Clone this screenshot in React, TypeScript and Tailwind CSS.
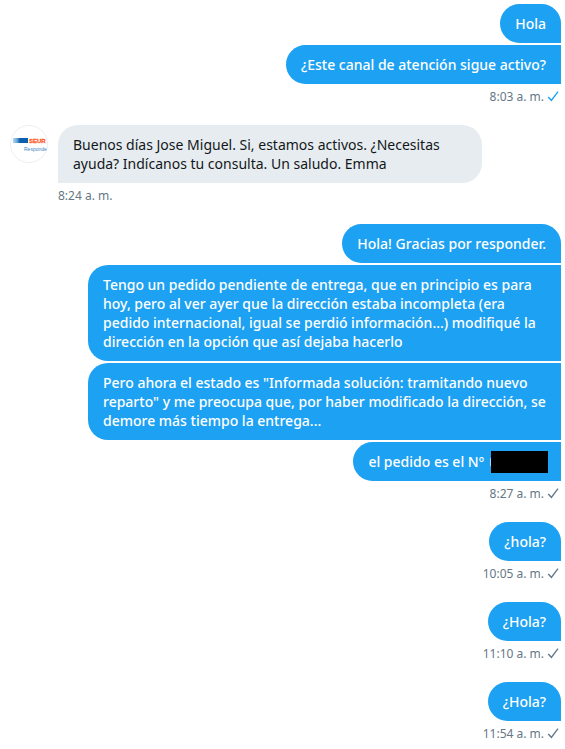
import type { ReactNode } from 'react'
import clsx from 'clsx'

interface Group {
  id: string
  from: 'me' | 'seur'
  messages: ReactNode[]
  time: string
  status?: 'read' | 'sent'
}

const GROUPS: Group[] = [
  {
    id: 'opening',
    from: 'me',
    messages: ['Hola', '¿Este canal de atención sigue activo?'],
    time: '8:03 a. m.',
    status: 'read',
  },
  {
    id: 'reply',
    from: 'seur',
    messages: [
      'Buenos días Jose Miguel. Si, estamos activos. ¿Necesitas ayuda? Indícanos tu consulta. Un saludo. Emma',
    ],
    time: '8:24 a. m.',
  },
  {
    id: 'order',
    from: 'me',
    messages: [
      'Hola! Gracias por responder.',
      'Tengo un pedido pendiente de entrega, que en principio es para hoy, pero al ver ayer que la dirección estaba incompleta (era pedido internacional, igual se perdió información...) modifiqué la dirección en la opción que así dejaba hacerlo',
      'Pero ahora el estado es "Informada solución: tramitando nuevo reparto" y me preocupa que, por haber modificado la dirección, se demore más tiempo la entrega...',
      <span className="flex items-center">
        el pedido es el Nº
        <span className="ml-1.5 h-2 w-px bg-white/60" />
        <span className="-my-2 -mr-0.5 h-[22px] w-[57px] bg-black" />
      </span>,
    ],
    time: '8:27 a. m.',
    status: 'sent',
  },
  { id: 'ping-1', from: 'me', messages: ['¿hola?'], time: '10:05 a. m.', status: 'sent' },
  { id: 'ping-2', from: 'me', messages: ['¿Hola?'], time: '11:10 a. m.', status: 'sent' },
  { id: 'ping-3', from: 'me', messages: ['¿Hola?'], time: '11:54 a. m.', status: 'sent' },
]

function SeurAvatar() {
  return (
    <svg viewBox="0 0 38 38" className="h-[38px] w-[38px] shrink-0" role="img" aria-label="SEUR Responde">
      <defs>
        <linearGradient id="seur-bar">
          <stop offset="0" stopColor="#b9d8ee" />
          <stop offset="0.3" stopColor="#5c9fd4" />
          <stop offset="0.45" stopColor="#0b5fae" />
          <stop offset="1" stopColor="#0b5fae" />
        </linearGradient>
      </defs>
      <circle cx="19" cy="19" r="18.5" fill="#fff" stroke="#eceff1" />
      <rect x="3" y="13" width="15" height="5" fill="url(#seur-bar)" />
      <text
        x="19"
        y="18"
        fontSize="6"
        fontWeight="700"
        fill="#ff5a1f"
        stroke="#ff5a1f"
        strokeWidth="0.3"
        fontFamily="Liberation Sans, sans-serif"
      >
        SEUR
      </text>
      <text x="14" y="26" fontSize="5" fill="#3f86c6" fontFamily="Liberation Sans, sans-serif">
        Responde
      </text>
    </svg>
  )
}

function StatusCheck({ read }: { read: boolean }) {
  return (
    <svg
      viewBox="0 0 12 12"
      className={clsx('h-3 w-3', read ? 'text-[#1da1f2]' : 'text-[#657786]')}
      fill="none"
      stroke="currentColor"
      strokeWidth="1.4"
      role="img"
      aria-label={read ? 'Leído' : 'Enviado'}
    >
      <path d="M1.2 5.9 L4.4 9.3 L11 0.6" />
    </svg>
  )
}

function MessageGroup({ group }: { group: Group }) {
  const mine = group.from === 'me'

  return (
    <li className="flex gap-2.5">
      {!mine && <SeurAvatar />}
      <div className={clsx('flex min-w-0 flex-1 flex-col gap-0.5', mine ? 'items-end' : 'items-start')}>
        {group.messages.map((message, i) => (
          <div
            key={i}
            className={clsx(
              'px-[15px] py-2.5 text-[14px] leading-[19px]',
              mine
                ? 'max-w-[473px] rounded-l-[20px] bg-[#1da1f2] font-medium text-white'
                : 'max-w-[424px] rounded-t-[20px] rounded-br-[20px] bg-[#e6ecf0] text-[#14171a]',
              mine && i === 0 && 'rounded-tr-[20px]'
            )}
          >
            {message}
          </div>
        ))}
        <div className="flex h-[19px] items-end gap-[3px] pr-0.5 text-[12px] leading-4 text-[#657786]">
          <time>{group.time}</time>
          {group.status && (
            <span className="pb-0.5">
              <StatusCheck read={group.status === 'read'} />
            </span>
          )}
        </div>
      </div>
    </li>
  )
}

export default function App() {
  return (
    <main className="bg-white py-1 pl-2.5 pr-1 font-['Noto_Sans','Open_Sans',sans-serif]">
      <ol className="flex flex-col gap-5">
        {GROUPS.map((group) => (
          <MessageGroup key={group.id} group={group} />
        ))}
      </ol>
    </main>
  )
}
